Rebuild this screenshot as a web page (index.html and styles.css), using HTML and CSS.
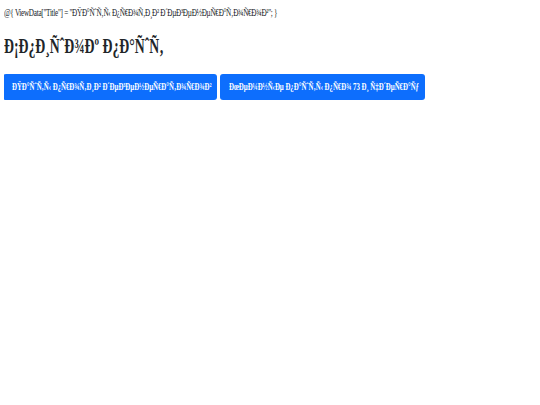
FILE: index.html
```html
<!DOCTYPE html>
<html lang="ru">
<head>
<meta charset="utf-8">
<title>Ð¡Ð¿Ð¸ÑÐ¾Ðº Ð¿Ð°ÑÑ‚</title>
<link rel="stylesheet" href="styles.css">
</head>
<body>
  <p class="razor"><span class="sx">@{ ViewData["Title"] = "ÐŸÐ°ÑˆÑ‚Ñ‹ Ð¿Ñ€Ð¾Ñ‚Ð¸Ð² Ð´ÐµÐ³ÐµÐ½ÐµÑ€Ð°Ñ‚Ð¾Ñ€Ð¾Ð²"; }</span></p>
  <h1 class="title"><span class="sx">Ð¡Ð¿Ð¸ÑˆÐ¾Ðº Ð¿Ð°ÑˆÑ‚</span></h1>
  <div class="actions">
    <a class="btn btn-first" href="#"><span class="sx">ÐŸÐ°ÑˆÑ‚Ñ‹ Ð¿Ñ€Ð¾Ñ‚Ð¸Ð² Ð´ÐµÐ³ÐµÐ½ÐµÑ€Ð°Ñ‚Ð¾Ñ€Ð¾Ð²</span></a>
    <a class="btn btn-second" href="#"><span class="sx">ÐœÐµÐ¼Ð½Ñ‹Ðµ Ð¿Ð°ÑˆÑ‚Ñ‹ Ð¿Ñ€Ð¾ 73 Ð¸ Ñ‡Ð´ÐµÑ€Ð°Ñƒ</span></a>
  </div>
</body>
</html>
```
FILE: styles.css
```css
html, body {
  background: #ffffff;
}
body {
  margin: 4px;
  font-family: "Liberation Serif", "Times New Roman", serif;
  color: #212529;
}
.sx {
  display: inline-block;
  white-space: nowrap;
  transform: scaleX(0.655);
  transform-origin: 0 0;
}
.razor {
  margin: 0;
  padding-top: 1px;
  font-size: 11px;
  line-height: 14px;
  letter-spacing: -0.45px;
}
.title {
  margin: 14px 0 0;
  font-size: 21px;
  line-height: 26px;
  font-weight: bold;
}
.actions {
  display: flex;
  gap: 3px;
  margin: 15px 0 0 -1px;
}
.btn {
  flex: none;
  box-sizing: border-box;
  display: block;
  height: 26px;
  background: #0d6efd;
  color: #ffffff;
  text-decoration: none;
  font-weight: bold;
  font-size: 10.4px;
  line-height: 26px;
  padding: 0 9px;
  border-radius: 3px;
}
.btn-first {
  width: 214px;
}
.btn-second {
  width: 205px;
}
```
